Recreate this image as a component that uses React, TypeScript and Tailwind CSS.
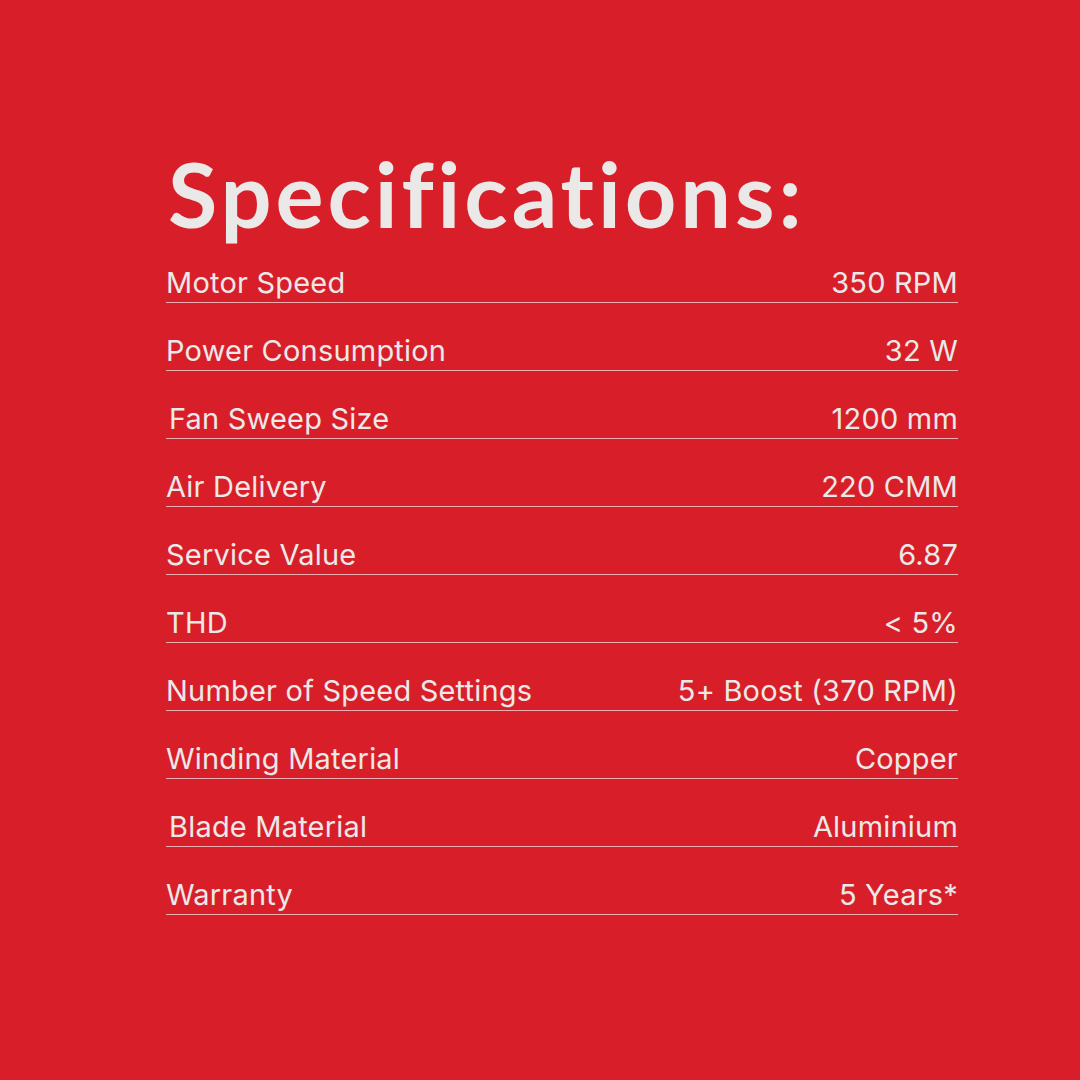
const specs = [
  { label: 'Motor Speed', value: '350 RPM' },
  { label: 'Power Consumption', value: '32 W' },
  { label: 'Fan Sweep Size', value: '1200 mm', indent: true },
  { label: 'Air Delivery', value: '220 CMM' },
  { label: 'Service Value', value: '6.87' },
  { label: 'THD', value: '< 5%' },
  { label: 'Number of Speed Settings', value: '5+ Boost (370 RPM)' },
  { label: 'Winding Material', value: 'Copper' },
  { label: 'Blade Material', value: 'Aluminium', indent: true },
  { label: 'Warranty', value: '5 Years*' },
]

function App() {
  return (
    <main className="min-h-screen w-[1080px] h-[1080px] bg-[#d81f29] text-[#ebe8e8]">
      <div className="pl-[166px] pr-[122px] pt-[148px]">
        <h1 className="font-['Lato',sans-serif] text-[90px] font-bold leading-none tracking-[3.9px] pl-[2px]">
          Specifications:
        </h1>
        <div className="mt-[-3px]">
          {specs.map((item) => (
            <div
              className="flex h-[68px] items-end justify-between border-b border-[#eeaeb1] pb-[1px] font-['Inter',sans-serif] text-[29px] leading-[36px] tracking-[0.2px]"
              key={item.label}
            >
              <span className={item.indent ? 'pl-[3px]' : ''}>{item.label}</span>
              <span>{item.value}</span>
            </div>
          ))}
        </div>
      </div>
    </main>
  )
}

export default App
